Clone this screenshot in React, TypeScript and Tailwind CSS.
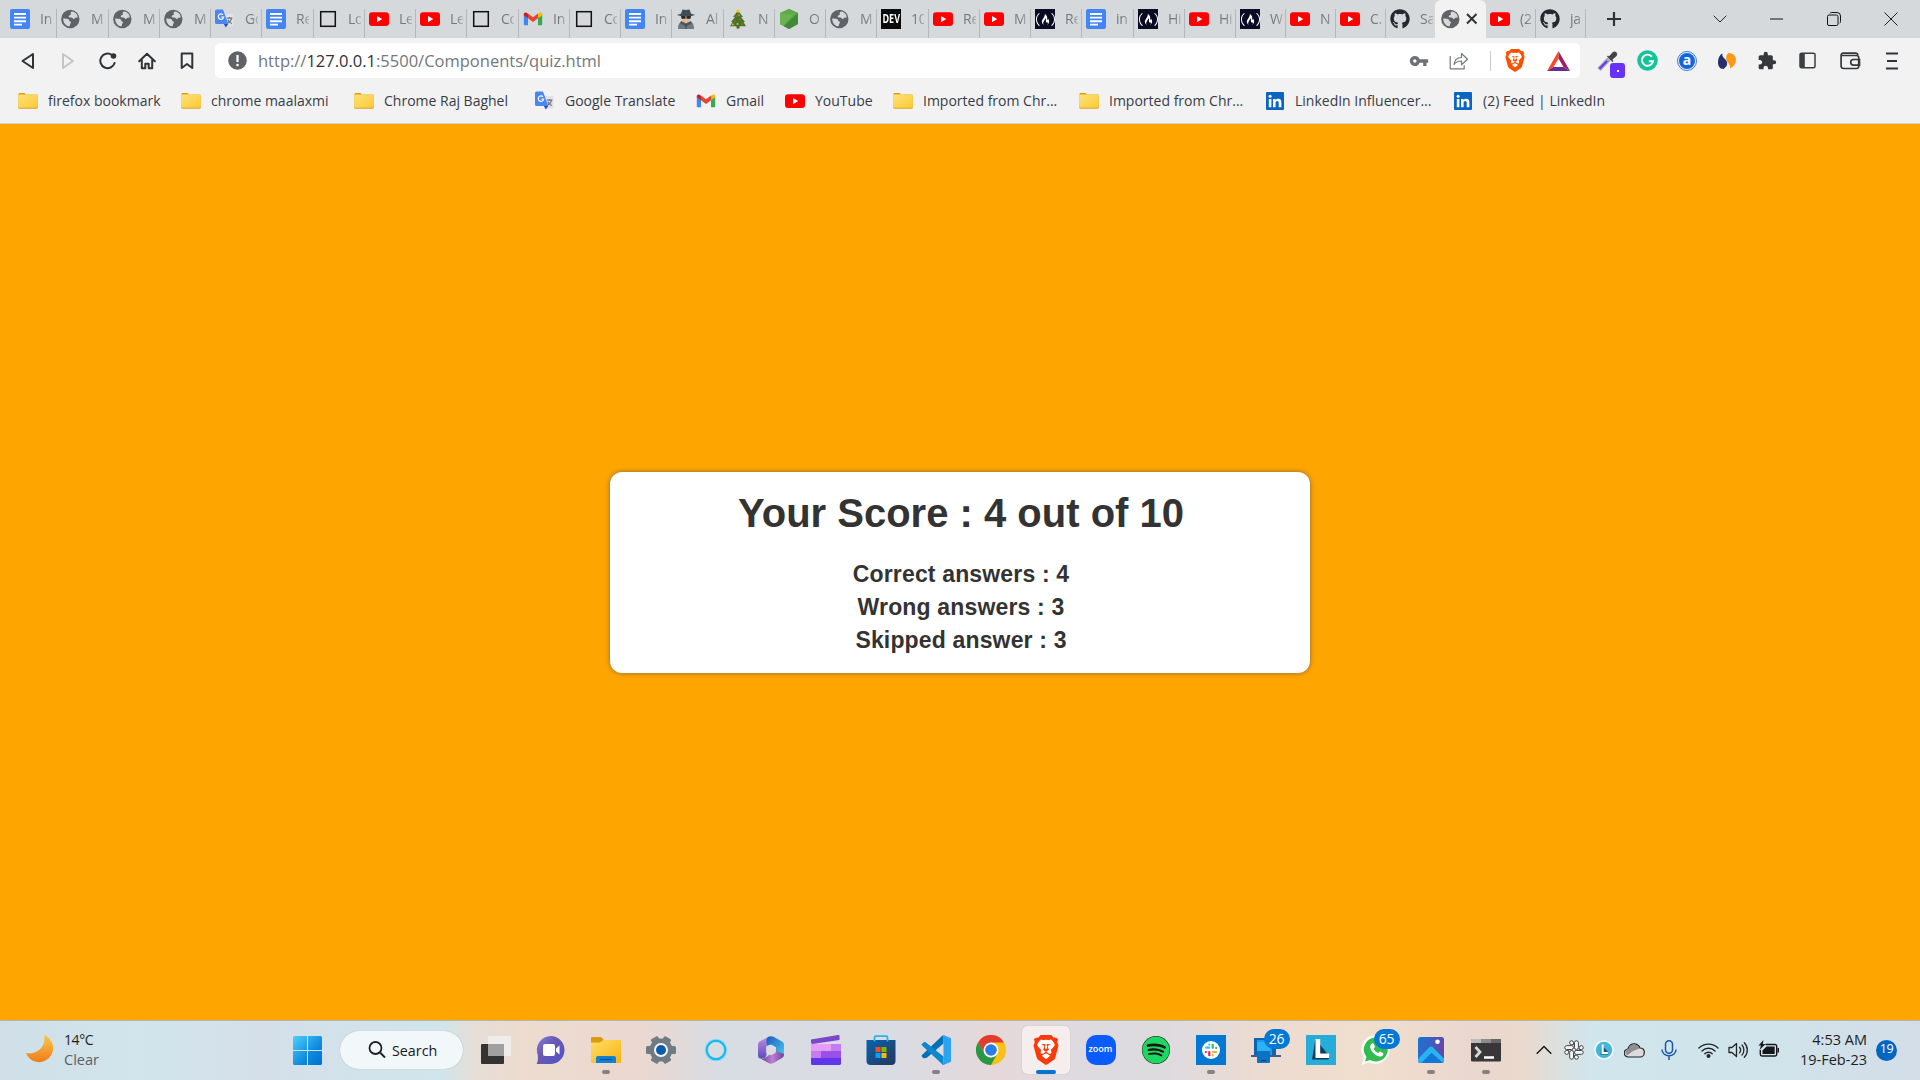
import React from "react";
import { SiSlack, SiFreecodecamp } from "react-icons/si";
import { FaGithub, FaSpotify } from "react-icons/fa";
import { MdExtension, MdVpnKey } from "react-icons/md";

/* ---------- favicons ---------- */
const Docs = () => (
  <svg width="20" height="20" viewBox="0 0 20 20">
    <rect width="20" height="20" rx="2" fill="#4285f4" />
    <path d="M4 5h12M4 8.600h12M4 12.200h12M4 15.600h8" stroke="#fff" strokeWidth="1.900" />
  </svg>
);
const Globe = () => (
  <svg width="20" height="20" viewBox="0 0 20 20">
    <circle cx="9.300" cy="10" r="9.200" fill="#5f6368" />
    <path d="M11 2.600c-1.800.6-1.600 2-.9 2.700-.6 1-2.400.9-2.400 2.300 0 1.100 1.200 1 2.500 1 1.500 0 1.600 1.400 2.600 1.400 1.100 0 1.100-1.500 2.200-1.500l1.600.3C17 5.500 14.600 3.300 11 2.600zM2.200 9.400c1.200.2 3.900.1 5 .7 1.400.8.5 1.900 1.900 2.300 1.300.3 1 1.200.3 2-.6.7-.2 1.600-.9 2.900C4.900 17 2.100 13.800 2.200 9.400z" fill="#d5d9dc" />
  </svg>
);
const Translate = () => (
  <svg width="20" height="20" viewBox="0 0 20 20">
    <path d="M8 5h10.500v12.500H12z" fill="#e0e2e4" />
    <path d="M11.800 9.200h5.600M14.500 8v1.200M16.500 9.500c-.5 2-2 3.800-4 4.800M12.800 10.800c.8 1.700 2.200 3 4 3.800" stroke="#71777d" strokeWidth="1.200" fill="none" />
    <path d="M0 2a1.500 1.500 0 0 1 1.500-1.500H8L13.300 15H1.500A1.500 1.500 0 0 1 0 13.500z" fill="#4a86f0" />
    <path d="M8.800 15h4.500l-2.500 3.500z" fill="#2450c4" />
    <path d="M8 5.800A2.700 2.700 0 1 0 8.700 8H6.200" stroke="#fff" strokeWidth="1.200" fill="none" />
  </svg>
);
const Square = () => (
  <svg width="20" height="20" viewBox="0 0 20 20">
    <rect x="2.700" y="2.700" width="14.600" height="14.600" fill="none" stroke="#111" strokeWidth="1.500" />
  </svg>
);
const YouTube = () => (
  <svg width="20" height="20" viewBox="0 0 20 20">
    <rect y="3.200" width="20" height="13.800" rx="3" fill="#f00" />
    <path d="M8 7l5.200 3.100L8 13.200z" fill="#fff" />
  </svg>
);
const Gmail = () => (
  <svg width="20" height="20" viewBox="0 0 20 20">
    <path d="M.8 5.500v9.800c0 .6.500 1 1 1H5V8.500z" fill="#4285f4" />
    <path d="M15 8.500v7.800h3.200c.6 0 1-.5 1-1V5.500z" fill="#34a853" />
    <path d="M15 4.700v4.600l4.200-3V5.200c0-1.700-1.500-2-2.700-1.400z" fill="#fbbc04" />
    <path d="M.8 6.200L5 9.300V4.700L3.500 3.800C2 3 .8 3.800.8 5.200z" fill="#c5221f" />
    <path d="M5 4.600l5 3.700 5-3.700v4.700L10 13 5 9.300z" fill="#ea4335" />
  </svg>
);
const Spy = () => (
  <svg width="20" height="20" viewBox="0 0 20 20">
    <path d="M2 20c0-4 1-6.500 4-7.200h8c3 .7 4 3.200 4 7.200z" fill="#6c7982" />
    <path d="M6 7h8v5l-4 3-4-3z" fill="#e8bb94" />
    <path d="M5 12l5 2.500 5-2.500 1 2.500-6 3-6-3z" fill="#4d5a63" />
    <path d="M5 7h4.500v2.700H5.500zM10.500 7H15l-.5 2.700h-4z" fill="#20262a" />
    <path d="M1 5.800c2-.5 3.300-.8 4-1.400L6.500.5c2 .6 5 .6 7 0L15 4.400c.7.6 2 .9 4 1.400-3 2-15 2-18 0z" fill="#414c54" />
    <path d="M10 15v5" stroke="#3e4950" />
  </svg>
);
const Tree = () => (
  <svg width="20" height="20" viewBox="0 0 20 20">
    <rect x="8.500" y="16" width="3" height="3.500" fill="#7a4b2a" />
    <path d="M10 1.500L15 8h-2l4 5h-1.500l2.500 4.300H2L4.500 13H3l4-5H5z" fill="#3c7a2a" />
    <circle cx="10" cy="2" r="1.700" fill="#f7c325" />
    <g fill="#e2452e"><circle cx="8.500" cy="7" r="1" /><circle cx="12" cy="10.500" r="1.100" /><circle cx="7" cy="12" r="1.100" /><circle cx="14" cy="15" r="1.100" /></g>
    <g fill="#f4b02c"><circle cx="11" cy="6" r=".8" /><circle cx="9.500" cy="15" r="1" /><circle cx="4.800" cy="15.500" r="1" /></g>
  </svg>
);
const Node = () => (
  <svg width="20" height="20" viewBox="0 0 20 20">
    <path d="M10 0l9 4v11l-9 5-9-5V4z" fill="#5aa648" />
    <path d="M1 4v11l3.500 2L17 3z" fill="#6ab352" />
    <path d="M19 4v11l-9 5-5.500-3z" fill="#43893a" />
    <path d="M10 0l9 4-2 2-16-2z" fill="#5fa94a" />
  </svg>
);
const Dev = () => (
  <span className="flex h-5 w-5 items-center justify-center overflow-hidden bg-[#0a0a0a]">
    <span className="scale-x-[0.78] scale-y-110 text-[11.5px] leading-5 font-bold text-white">DEV</span>
  </span>
);
const Fcc = () => (
  <span className="flex h-5 w-5 items-center justify-center bg-[#0a0a23]">
    <SiFreecodecamp size={19} color="#fff" />
  </span>
);
const GitHub = () => <FaGithub size={20} color="#24292f" />;
const Folder = () => (
  <svg width="20" height="20" viewBox="0 0 20 20">
    <defs>
      <linearGradient id="fold" x1="0" y1="0" x2="1" y2="1">
        <stop offset="0" stopColor="#ffe27a" />
        <stop offset="1" stopColor="#fcc934" />
      </linearGradient>
    </defs>
    <path d="M.5 4V3.300c0-.7.500-1.300 1.200-1.300h5l1.500 2z" fill="#dc9b10" />
    <rect x=".2" y="3.500" width="19.600" height="14.300" rx="1.300" fill="#d9a520" />
    <rect x=".2" y="3.500" width="19.600" height="13.300" rx="1.300" fill="url(#fold)" />
  </svg>
);
const LinkedIn = () => (
  <svg width="20" height="20" viewBox="0 0 20 20">
    <rect x="1" y="1" width="18" height="18" rx="1" fill="#0a66c2" />
    <path d="M3.800 8h2.600v8.300H3.800zM8 8h2.500v1.200c.5-.8 1.400-1.400 2.700-1.400 2.500 0 3.200 1.600 3.200 4v4.500h-2.700v-4c0-1.200-.2-2.200-1.500-2.200s-1.600 1-1.600 2.200v4H8z" fill="#fff" />
    <circle cx="5.100" cy="5.200" r="1.500" fill="#fff" />
  </svg>
);
const Lion = ({ w, h, color }: { w: number; h: number; color: string }) => (
  <svg width={w} height={h} viewBox="0 0 24 28">
    <path d="M7 0h10l2.300 2.500c1.500-.4 2.800.3 3.900 1.700L22.500 6.500l1.200 3.200-3 11.300c-.3 1-.8 1.700-1.700 2.300L13 27.500c-.7.500-1.300.5-2 0l-6-4.200c-.9-.6-1.400-1.300-1.700-2.300L.3 9.700l1.200-3.200L.8 4.200C1.900 2.800 3.200 2.100 4.700 2.500z" fill={color} />
    <path d="M7.500 4.200L10 4.800c1.300-.5 2.700-.5 4 0l2.500-.6c1 0 3.700 4.200 3.700 5.100 0 .8-2.400 3.200-3.400 4.300-.5.500-.3 1 .1 1.700.4.800 0 1.900-.8 2.200-.9.3-1.700-.4-2.500-1l-1-.7c-.3-.2-.3-.4 0-.6l1.600-1c.5-.3.400-.8.200-1.300l-.7-1.700c-.3-.8-.1-1.100.5-1.400l2.600-1-3.200-.3c-1 0-1.100.300-1 1l.5 2.700c0 .6-.8.8-1.100.8s-1.100-.2-1.100-.8l.5-2.700c.1-.7 0-1-1-1l-3.200.3 2.600 1c.6.300.8.6.5 1.400l-.7 1.700c-.2.5-.3 1 .2 1.300l1.600 1c.3.2.3.4 0 .6l-1 .7c-.8.600-1.600 1.300-2.500 1-.8-.3-1.200-1.400-.8-2.200.4-.7.600-1.200.1-1.700-1-1.100-3.400-3.500-3.400-4.300 0-.9 2.700-5.100 3.700-5.100z" fill="#fff" />
    <path d="M12 17.300c.5 0 3.300 1.500 3.500 1.800.3.300 0 .6-.2.800l-3 2.400c-.2.200-.4.200-.6 0l-3-2.400c-.2-.2-.5-.5-.2-.8.2-.3 3-1.800 3.500-1.800z" fill="#fff" />
  </svg>
);

/* ---------- tab strip ---------- */
type Tab = { w: string; t: string; I: () => React.ReactElement };
const W57 = "w-[57px] pl-[10px]", W52 = "w-[52px] pl-1", W51 = "w-[51px] pl-1", W50 = "w-[50px] pl-1", W49 = "w-[49px] pl-1";
const before: Tab[] = [
  { w: W57, t: "In", I: Docs },
  { w: W52, t: "M", I: Globe },
  { w: W51, t: "M", I: Globe },
  { w: W51, t: "M", I: Globe },
  { w: W51, t: "Go", I: Translate },
  { w: W52, t: "Re", I: Docs },
  { w: W51, t: "Lo", I: Square },
  { w: W51, t: "Le", I: YouTube },
  { w: W51, t: "Le", I: YouTube },
  { w: W52, t: "Co", I: Square },
  { w: W51, t: "In", I: Gmail },
  { w: W51, t: "Co", I: Square },
  { w: W51, t: "In", I: Docs },
  { w: W52, t: "Al", I: Spy },
  { w: W51, t: "N", I: Tree },
  { w: W51, t: "O", I: Node },
  { w: W51, t: "M", I: Globe },
  { w: W52, t: "10", I: Dev },
  { w: W51, t: "Re", I: YouTube },
  { w: W51, t: "M", I: YouTube },
  { w: W51, t: "Re", I: Fcc },
  { w: W52, t: "in", I: Docs },
  { w: W51, t: "Hi", I: Fcc },
  { w: W51, t: "Hi", I: YouTube },
  { w: W50, t: "W", I: Fcc },
  { w: W50, t: "N", I: YouTube },
  { w: W50, t: "C.", I: YouTube },
];
const after: Tab[] = [
  { w: W50, t: "(2", I: YouTube },
  { w: W50, t: "ja", I: GitHub },
];
const TabItem = ({ tab, line = true }: { tab: Tab; line?: boolean }) => (
  <div className={`${tab.w} mt-[9px] flex h-[29px] shrink-0 ${line ? "border-r border-[#b4b8bb]" : ""}`}>
    <span className="h-5 w-5 shrink-0"><tab.I /></span>
    <span className="ml-[10px] w-[13px] overflow-hidden text-[14px] leading-[19px] tracking-[-0.2px] whitespace-nowrap text-[#75797e] [mask-image:linear-gradient(90deg,#000_50%,rgba(0,0,0,0.35))]">{tab.t}</span>
  </div>
);

const TabStrip = () => (
  <div className="flex h-[38px] bg-[#d5d9dc]">
    {before.map((t, i) => <TabItem key={i} tab={t} />)}
    <TabItem tab={{ w: W49, t: "Sa", I: GitHub }} line={false} />
    <div className="flex w-[51px] shrink-0 gap-[5px] rounded-t-[6px] bg-[#f2f2f2] pt-[9px] pl-[6px]">
      <Globe />
      <svg width="12" height="20" viewBox="0 0 12 20"><path d="M1 5l9.500 9.500M10.500 5L1 14.500" stroke="#303236" strokeWidth="2" /></svg>
    </div>
    {after.map((t, i) => <TabItem key={i} tab={t} />)}
    <div className="flex flex-1 items-center pb-px">
      <svg className="ml-5" width="16" height="16" viewBox="0 0 16 16"><path d="M8 1v14M1 8h14" stroke="#303236" strokeWidth="2.200" /></svg>
      <svg className="ml-[91px]" width="14" height="8" viewBox="0 0 14 8"><path d="M.7.7L7 7 13.300.7" fill="none" stroke="#222" /></svg>
      <svg className="ml-[43px]" width="13" height="2" viewBox="0 0 13 2"><path d="M0 1h13" stroke="#111" /></svg>
      <svg className="ml-[44px]" width="14" height="14" viewBox="0 0 14 14">
        <rect x=".5" y="3" width="10.500" height="10.500" rx="1.500" fill="none" stroke="#111" />
        <path d="M2.800 1.200C3.300.7 4 .5 4.500.5h5.500A3.500 3.500 0 0 1 13.500 4v5.500c0 .8-.3 1.300-.8 1.700" fill="none" stroke="#111" />
      </svg>
      <svg className="ml-[43px]" width="14" height="14" viewBox="0 0 14 14"><path d="M.5.5l13 13M13.500.5l-13 13" stroke="#222" /></svg>
    </div>
  </div>
);

/* ---------- toolbar ---------- */
const ink = "#303438";
const Toolbar = () => (
  <div className="flex h-[45px] items-center pl-5">
    <svg width="15" height="18" viewBox="0 0 15 18"><path d="M13 2v14L2.500 9z" fill="none" stroke={ink} strokeWidth="2" strokeLinejoin="round" /></svg>
    <svg className="ml-[26px]" width="15" height="18" viewBox="0 0 15 18"><path d="M2 2v14l10-7z" fill="none" stroke="#c3c5c7" strokeWidth="2" strokeLinejoin="round" /></svg>
    <svg className="ml-[23px]" width="18" height="18" viewBox="0 0 18 18">
      <path d="M13 3A7.300 7.300 0 1 0 15.600 11" fill="none" stroke={ink} strokeWidth="2" strokeLinecap="round" />
      <circle cx="14.500" cy="4" r="2.800" fill={ink} />
    </svg>
    <svg className="ml-[21px]" width="18" height="18" viewBox="0 0 18 18">
      <path d="M1.200 9.200L9 1.800l7.800 7.400M3.800 8v8.200h3.500v-4.500h3.400v4.500h3.500V8" fill="none" stroke={ink} strokeWidth="2" strokeLinejoin="round" strokeLinecap="round" />
    </svg>
    <svg className="ml-6" width="14" height="18" viewBox="0 0 14 18"><path d="M1.700 1.500h10.600v14.500L7 12l-5.300 4z" fill="none" stroke={ink} strokeWidth="2" strokeLinejoin="round" /></svg>

    <div className="ml-[21px] flex h-[35px] w-[1365px] items-center rounded-[5px] bg-white pl-[13px]">
      <svg width="19" height="19" viewBox="0 0 19 19"><circle cx="9.500" cy="9.500" r="9.300" fill="#5f6368" /><path d="M9.500 4v7" stroke="#fff" strokeWidth="2.200" /><circle cx="9.500" cy="14" r="1.300" fill="#fff" /></svg>
      <span className="ml-[11px] w-[1151px] shrink-0 pt-px text-[16.5px] whitespace-nowrap text-[#74777b]">
        http://<span className="text-[#2f3236]">127.0.0.1</span>:5500/Components/quiz.html
      </span>
      <MdVpnKey size={20} color="#6d7074" />
      <svg className="ml-5" width="20" height="18" viewBox="0 0 20 18">
        <path d="M1.200 4v12.800h14v-3.500M5 12.500c.5-4.500 3-6.800 7.500-7V1.500l6 5.800-6 5.500V9c-3.500 0-5.700 1-7.500 3.500z" fill="none" stroke="#76797c" strokeWidth="1.200" strokeLinejoin="round" />
      </svg>
      <span className="ml-[21px] h-5 w-px bg-[#c9cbcd]" />
      <span className="ml-[14px]"><Lion w={20} h={23} color="#ff5000" /></span>
      <svg className="ml-[22px]" width="23" height="20" viewBox="0 0 23 20">
        <path d="M11.500 0L0 20l6.500-4 5-8.500z" fill="#ff4724" />
        <path d="M11.500 0L23 20l-6.500-4-5-8.500z" fill="#9e1f63" />
        <path d="M0 20h23l-6.500-4h-10z" fill="#662d91" />
      </svg>
    </div>

    <div className="relative ml-[17px] h-[28px] w-[28px]">
      <svg width="22" height="22" viewBox="0 0 22 22" className="absolute top-[3px] left-0">
        <path d="M2 19.500L12 9" stroke="#a9a6b4" strokeWidth="4.500" />
        <path d="M2.500 18.800L10 11" stroke="#6b3df0" strokeWidth="2.300" />
        <path d="M10.500 6l5.500 5.500M12.500 7l3.500-4c2-2 4.500.5 3 2.500L15 9z" fill="#444" stroke="#444" strokeWidth="1.500" />
      </svg>
      <span className="absolute top-[16px] left-[13px] flex h-[15px] w-[15px] items-center justify-center rounded-[3px] bg-[#6930fa] pt-[2px]"><span className="h-[2px] w-[2px] bg-white" /></span>
    </div>
    <svg className="ml-[12px]" width="21" height="21" viewBox="0 0 21 21">
      <circle cx="10.500" cy="10.500" r="10.300" fill="#15c39a" />
      <path d="M14.800 6.600A5.600 5.600 0 1 0 16 11.300h-4.200" fill="none" stroke="#fff" strokeWidth="1.900" />
    </svg>
    <span className="ml-[19px] flex h-5 w-5 items-center justify-center rounded-full border border-[#3f7fd0] p-[1px]">
      <span className="flex h-4 w-4 items-center justify-center rounded-full bg-[#1166dd] pb-[2px] text-[14px] leading-none font-bold text-white">a</span>
    </span>
    <svg className="ml-5" width="20" height="20" viewBox="0 0 20 20">
      <path d="M5.500 2.500c-.8 3 1.600 4.300 3 6 2.500 3 2.500 6.500-2 9.500C2.500 18 .8 14.500 1 10.500c.2-4 2-7 4.500-8z" fill="#263069" />
      <path d="M13 17.500c.5-3-.9-4.500-2.300-6.300C8.500 8.200 8.800 4.500 11.300 2c5-.5 7.700 3.500 7.700 7-.2 4-2.500 7-6 8.500z" fill="#ff9817" />
    </svg>
    <span className="ml-5"><MdExtension size={20} color="#34383c" /></span>
    <svg className="ml-[22px]" width="17" height="17" viewBox="0 0 17 17"><rect x="1" y="1.200" width="15" height="14.600" rx="1.500" fill="none" stroke="#3b3e42" strokeWidth="1.500" /><path d="M1 1.500h4.800v14H1z" fill="#3b3e42" /></svg>
    <svg className="ml-6" width="21" height="18" viewBox="0 0 21 18">
      <path d="M2 3.500h14.500a2.200 2.200 0 0 1 2.200 2v9a2.200 2.200 0 0 1-2.200 2H3.500a2.500 2.500 0 0 1-2.400-2V3A2 2 0 0 1 3 1.200h13c1 0 1.800.7 1.900 1.800M19.500 7.500h-6a2.800 2.800 0 0 0 0 5.600h6z" fill="none" stroke="#34383c" strokeWidth="1.700" />
    </svg>
    <svg className="ml-[25px]" width="12" height="18" viewBox="0 0 12 18"><path d="M0 1.500h12M1 9h10M0 16.500h12" stroke="#303438" strokeWidth="1.800" /></svg>
  </div>
);

/* ---------- bookmarks ---------- */
const bookmarks = [
  { w: "w-[163px]", t: "firefox bookmark", I: Folder },
  { w: "w-[173px]", t: "chrome maalaxmi", I: Folder },
  { w: "w-[181px]", t: "Chrome Raj Baghel", I: Folder },
  { w: "w-[161px]", t: "Google Translate", I: Translate },
  { w: "w-[89px]", t: "Gmail", I: Gmail },
  { w: "w-[108px]", t: "YouTube", I: YouTube },
  { w: "w-[186px]", t: "Imported from Chr...", I: Folder },
  { w: "w-[186px]", t: "Imported from Chr...", I: Folder },
  { w: "w-[188px]", t: "LinkedIn Influencer...", I: LinkedIn },
  { w: "w-[160px]", t: "(2) Feed | LinkedIn", I: LinkedIn },
];
const Bookmarks = () => (
  <div className="flex h-[41px] items-center border-b border-[#d0d4dc] pl-[18px] pb-1">
    {bookmarks.map((b, i) => (
      <div key={i} className={`${b.w} flex shrink-0 items-center gap-[10px] text-[14px] whitespace-nowrap text-[#383c48]`}>
        <b.I />
        <span className="pb-[2px]">{b.t}</span>
      </div>
    ))}
  </div>
);

/* ---------- taskbar icons ---------- */
const SlackColor = ({ size }: { size: number }) => (
  <svg width={size} height={size} viewBox="0 0 18 18">
    <circle cx="9" cy="9" r="9" fill="#fff" />
    <g strokeWidth="2.200" strokeLinecap="round">
      <path d="M7.300 6.600H4M7.300 3.500v.2" stroke="#36c5f0" />
      <path d="M10.700 3.800v3M14.200 6.800v.1" stroke="#2eb67d" />
      <path d="M10.800 11h3.300M10.700 14.300v-.1" stroke="#ecb22e" />
      <path d="M7.300 11v3.200M3.800 11h.1" stroke="#e01e5a" />
    </g>
  </svg>
);
const TaskView = () => (
  <svg width="30" height="30" viewBox="0 0 30 30">
    <rect x="0" y="9" width="23" height="20" rx="1" fill="#333" />
    <rect x="7" y="1" width="23" height="20" rx="1" fill="#eee" opacity=".9" />
    <path d="M7 9h16v12H7z" fill="#999" opacity=".9" />
  </svg>
);
const Chat = () => (
  <svg width="30" height="30" viewBox="0 0 30 30">
    <defs><linearGradient id="chat" x1="0" y1="0" x2="1" y2="1"><stop offset="0" stopColor="#7b83eb" /><stop offset=".4" stopColor="#6c58b0" /><stop offset="1" stopColor="#4f52cc" /></linearGradient></defs>
    <path d="M15 1a14 14 0 1 1-1 28H1.500c-.8 0-1-.5-.5-1.200C2 26 2 24 1.800 20A14 14 0 0 1 15 1z" fill="url(#chat)" />
    <rect x="7" y="9" width="12" height="12" rx="2" fill="#fff" /><path d="M20 13.500l3.500-3v9l-3.500-3z" fill="#fff" />
  </svg>
);
const Explorer = () => (
  <svg width="30" height="30" viewBox="0 0 30 30">
    <defs><linearGradient id="ex" x1="0" y1="0" x2="1" y2="1"><stop offset="0" stopColor="#ffdc66" /><stop offset="1" stopColor="#f7b512" /></linearGradient></defs>
    <path d="M0 9V3.500C0 2.500.8 2 1.500 2H10l3 3-3 4z" fill="#dd9a0b" />
    <path d="M0 7.500h9L12.500 5H29c.6 0 1 .5 1 1v21c0 .6-.4 1-1 1H1c-.6 0-1-.4-1-1z" fill="url(#ex)" />
    <path d="M5 28v-5a2 2 0 0 1 2-2h16a2 2 0 0 1 2 2v5z" fill="#1181d2" /><path d="M9 24.500h12" stroke="#0b4f8f" strokeWidth="1.200" />
  </svg>
);
const Gear = () => (
  <svg width="30" height="30" viewBox="0 0 30 30">
    <g fill="#707b84">
      <circle cx="15" cy="15" r="11.500" />
      <rect x="11" y="0.800" width="8" height="28.400" rx="1.500" transform="rotate(30 15 15)" />
      <rect x="11" y="0" width="8" height="30" rx="1.500" transform="rotate(90 15 15)" />
      <rect x="11" y="0.800" width="8" height="28.400" rx="1.500" transform="rotate(150 15 15)" />
    </g>
    <circle cx="15" cy="15" r="7" fill="#f5f7f8" /><circle cx="15" cy="15" r="5" fill="#0f5bab" />
  </svg>
);
const Cortana = () => (
  <svg width="30" height="30" viewBox="0 0 30 30"><circle cx="15" cy="15" r="9.500" fill="none" stroke="#8edcf6" strokeWidth="3.500" /><circle cx="15" cy="15" r="9.300" fill="none" stroke="#17b6ef" strokeWidth="2" /></svg>
);
const M365 = () => (
  <svg width="30" height="30" viewBox="0 0 30 30">
    <defs>
      <linearGradient id="m1" x1="0" y1="0" x2="0" y2="1"><stop offset="0" stopColor="#c58be0" /><stop offset="1" stopColor="#5b4dbd" /></linearGradient>
      <linearGradient id="m2" x1="0" y1="0" x2="1" y2="1"><stop offset="0" stopColor="#1a59b8" /><stop offset="1" stopColor="#45cdf8" /></linearGradient>
      <linearGradient id="m3" x1="0" y1="0" x2="1" y2="0"><stop offset="0" stopColor="#5d3a86" /><stop offset=".5" stopColor="#c07fd9" /><stop offset="1" stopColor="#6d4494" /></linearGradient>
    </defs>
    <path d="M13 1.500L3.500 6.500A4 4 0 0 0 2 9.500V20c0 2 .8 3.500 2.500 3.500H7c2-.5 3.500-2 3.500-4V10z" fill="url(#m1)" />
    <path d="M12.500 1.800c1.500-.9 3.500-.9 5 0L26 6.500A3.500 3.500 0 0 1 28 9.500V20c-1 1.500-4 1-8-1.500v-6l-5-3-4.500 1.500V6c0-2 .5-3.500 2-4.200z" fill="url(#m2)" />
    <path d="M28 19c0 2-.5 3.200-2 4l-8.500 5a5 5 0 0 1-5 0l-8-4.500c3 .5 5-.5 6.500-2l4-3 5-2.500 8 3z" fill="url(#m3)" />
    <path d="M15 9.800l4.700 2.500v5.400L15 20.300l-4.700-2.600v-5.400z" fill="#dcdce0" />
  </svg>
);
const Clipchamp = () => (
  <svg width="30" height="30" viewBox="0 0 30 30">
    <path d="M0 4.500L27 0c1-.2 1.500.3 1.500 1v4L1.500 9C.6 9 0 8 0 7z" fill="#7d45c9" />
    <path d="M0 9h30v7H0z" fill="#c47af0" /><path d="M0 9h20v7H0z" fill="#e49cf6" />
    <path d="M0 16h30v7H0z" fill="#9a4eea" /><path d="M0 16h10v7H0z" fill="#c77bef" />
    <path d="M0 23h30v5.500c0 .8-.6 1.500-1.500 1.500h-27C.6 30 0 29.300 0 28.500z" fill="#6036ea" />
  </svg>
);
const Store = () => (
  <svg width="30" height="30" viewBox="0 0 30 30">
    <defs><linearGradient id="st" x1="0" y1="0" x2="1" y2="1"><stop offset="0" stopColor="#0a63ae" /><stop offset="1" stopColor="#25365c" /></linearGradient></defs>
    <path d="M.5 5h29v21c0 2.500-1.500 4-4 4h-21c-2.500 0-4-1.500-4-4z" fill="url(#st)" />
    <path d="M8.500 6.500V2.500c0-.8.500-1.300 1.300-1.300h10.400c.8 0 1.300.5 1.300 1.300v4" fill="none" stroke="#26b5ee" strokeWidth="1.800" />
    <path d="M9.500 12h5v5h-5z" fill="#f25022" /><path d="M15.500 12h5v5h-5z" fill="#7fba00" /><path d="M9.500 18h5v5h-5z" fill="#00a4ef" /><path d="M15.500 18h5v5h-5z" fill="#ffb900" />
  </svg>
);
const VsCode = () => (
  <svg width="30" height="30" viewBox="0 0 30 30">
    <path d="M22.500 0v8.500L5.500 23l-3 .2L1 21.800c-.6-.5-.6-1.200 0-1.700L21 1z" fill="#0071b6" />
    <path d="M22.500 30v-8.500L5 7.500c-.8-.6-1.700-.6-2.500 0L1 8.700c-.6.5-.6 1.200 0 1.700L21 29z" fill="#0d87cd" />
    <path d="M22.500 0L30 3.300v23.400L22.500 30c-1 0-1.500-.5-1.500-1l1.500-.5z" fill="#2aa4ee" />
  </svg>
);
const Chrome = () => (
  <svg width="30" height="30" viewBox="0 0 30 30">
    <circle cx="15" cy="15" r="15" fill="#fbc116" />
    <path d="M2 7.500A15 15 0 0 1 28 7.500H15L8.500 18.700z" fill="#e33b2e" />
    <path d="M2 7.500l6.500 11.200A7.500 7.500 0 0 0 15 22.500l6-3.200L15 30A15 15 0 0 1 2 7.500z" fill="#279847" />
    <circle cx="15" cy="15" r="7.500" fill="#fff" /><circle cx="15" cy="15" r="5.800" fill="#2b7be8" />
  </svg>
);
const Brave = () => <Lion w={26} h={30} color="#fb3a0c" />;
const Zoom = () => (
  <span className="flex h-[30px] w-[30px] items-center justify-center rounded-[10px] bg-[#0b5cff] pb-[3px] text-[9px] leading-none font-semibold text-white">zoom</span>
);
const Spotify = () => (
  <span className="rounded-full bg-[#191414] bg-clip-content p-[2px]"><FaSpotify size={28} color="#1ed760" /></span>
);
const SlackTile = () => (
  <span className="flex h-[30px] w-[30px] items-center justify-center bg-[#0078d4]"><SlackColor size={18} /></span>
);
const Phone = () => (
  <svg width="30" height="30" viewBox="0 0 30 30">
    <path d="M3 3h22v17H3z" fill="#0f62ad" /><path d="M0 20h30v2H0z" fill="#3c5f93" />
    <path d="M6 5h15v15H6z" fill="#1e9be8" /><rect x="6" y="14" width="13" height="14" rx="1" fill="#0e72c4" /><path d="M6 7h13v9H6z" fill="#2cb1f2" /><path d="M10 25.500h5" stroke="#0a3f78" />
  </svg>
);
const LTile = () => (
  <svg width="30" height="30" viewBox="0 0 30 30"><path d="M0 0h30v30H0z" fill="#25acd8" /><path d="M9.500 4L6 24.500h16.500l1-3z" fill="#123c5e" /><path d="M9.500 4h4.700v14.500h9V23H9.500z" fill="#fff" /></svg>
);
const WhatsApp = () => (
  <svg width="30" height="30" viewBox="0 0 30 30">
    <path d="M15.500 0A14.500 14.500 0 1 1 8 27.500L.5 30l2.300-7.500A14.500 14.500 0 0 1 15.500 0z" fill="#f8faf8" />
    <path d="M15.500 2.500A12 12 0 1 1 9 25l-5 1.500L5.500 22a12 12 0 0 1 10-19.500z" fill="#34bb4f" />
    <path d="M11 8.500c-3 2-2 6 1.500 9.500s7.500 5 9.500 2c.8-1.200.3-1.800-.5-2.300l-2.300-1.200c-1-.4-1.200 1.700-2.200 1.400-1.800-.6-3.800-2.500-4.300-4.200-.2-.8 1.500-1.200 1.200-2.200l-1-2.400c-.4-.8-1.100-1.100-1.900-.6z" fill="#fff" />
  </svg>
);
const Photos = () => (
  <svg width="26" height="26" viewBox="0 0 26 26">
    <defs><linearGradient id="ph" x1="0" y1="0" x2="1" y2=".3"><stop offset="0" stopColor="#1378d6" /><stop offset="1" stopColor="#6546aa" /></linearGradient></defs>
    <rect width="26" height="26" rx="2.500" fill="url(#ph)" />
    <path d="M0 22l11-11.500c1.300-1.400 2.700-1.400 4 0L26 21.500v2.500l-1.500 1.700L13.500 16 3.500 26H2l-2-2z" fill="#27b4f2" />
    <path d="M3.500 26l10-10 11 9.700-.5.300z" fill="#1377d8" />
    <circle cx="19.500" cy="4.800" r="2.300" fill="#fff" />
  </svg>
);
const Terminal = () => (
  <svg width="30" height="24" viewBox="0 0 30 24">
    <rect y="1" width="30" height="22.500" rx="1.200" fill="#373737" /><path d="M0 2c0-.6.4-1 1-1h9v4H0z" fill="#bdbdbd" /><path d="M10 1h10v4H10z" fill="#8c8c8c" /><path d="M20 1h9c.6 0 1 .4 1 1v3H20z" fill="#666" />
    <path d="M4.500 9l4.500 5-4.500 5" fill="none" stroke="#d6d6d6" strokeWidth="2.800" /><path d="M13 19.500h10" stroke="#fff" strokeWidth="2.500" />
  </svg>
);

type AppEntry = { I: () => React.ReactElement; dot?: boolean; active?: boolean; badge?: string };
const apps: AppEntry[] = [
  { I: TaskView }, { I: Chat }, { I: Explorer, dot: true }, { I: Gear }, { I: Cortana }, { I: M365 }, { I: Clipchamp }, { I: Store },
  { I: VsCode, dot: true }, { I: Chrome }, { I: Brave, active: true }, { I: Zoom }, { I: Spotify }, { I: SlackTile, dot: true },
  { I: Phone, badge: "26" }, { I: LTile }, { I: WhatsApp, badge: "65" }, { I: Photos, dot: true }, { I: Terminal, dot: true },
];

const Taskbar = () => (
  <div className="flex h-[60px] items-center border-t border-[#b3b6ae] bg-[linear-gradient(90deg,#d0dfe7_0px,#d1e5ec_140px,#d4dfe9_260px,#d0e5ec_440px,#e6ded7_475px,#eddccf_520px,#ead8d1_645px,#d8dde3_720px,#d9dce2_900px,#e6d8da_1000px,#dedbe0_1080px,#dedbdf_1170px,#ecdbd0_1260px,#f0decd_1370px,#ead7cf_1470px,#ead9cd_1520px,#d0e5ec_1590px,#d0e4eb_1750px,#d3dde8_1920px)] pb-px">
    <div className="flex w-[293px] items-center pl-[26px]">
      <svg className="mb-[2px]" width="28" height="28" viewBox="0 0 28 28">
        <defs><linearGradient id="moon" x1="0" y1="0" x2="0" y2="1"><stop offset="0" stopColor="#f8c94a" /><stop offset="1" stopColor="#ee7d1c" /></linearGradient></defs>
        <path d="M18 0A14 14 0 1 1 0 18C9 20 21 13 18 0z" fill="url(#moon)" />
      </svg>
      <div className="ml-[10px] text-[14px] leading-5 text-[#1c1f22]">
        <div className="tracking-[-0.4px]">14°C</div>
        <div className="text-[14.5px] text-[#596066]">Clear</div>
      </div>
    </div>
    <svg width="29" height="29" viewBox="0 0 29 29">
      <defs><linearGradient id="win" x1="0" y1="0" x2="1" y2="1"><stop offset="0" stopColor="#4fd0fb" /><stop offset=".6" stopColor="#0f8ade" /><stop offset="1" stopColor="#0071cf" /></linearGradient></defs>
      <path d="M1 0h13v14H0V1zM15 0h13l1 1v13H15zM0 15h14v14H1l-1-1zM15 15h14v13l-1 1H15z" fill="url(#win)" />
    </svg>
    <div className="ml-[18px] flex h-[38px] w-[123px] items-center rounded-full bg-[#f2f7fa] pl-[28px] shadow-[0_0_1px_rgba(0,0,0,0.3)]">
      <svg width="18" height="18" viewBox="0 0 18 18"><circle cx="7.500" cy="7" r="6" fill="none" stroke="#202427" strokeWidth="1.800" /><path d="M12 11.500l5 5" stroke="#202427" strokeWidth="2" /></svg>
      <span className="ml-[6px] pt-px text-[14.3px] text-[#17191b]">Search</span>
    </div>
    <div className="ml-[5px] flex">
      {apps.map((a, i) => (
        <div key={i} className="flex w-[55px] justify-center">
          <div className={`relative flex h-12 w-12 items-center justify-center rounded-[5px] ${a.active ? "bg-[#f5eeed] shadow-[0_0_1px_rgba(0,0,0,0.3)]" : ""}`}>
            <a.I />
            {a.dot && <span className="absolute bottom-0 left-5 h-1 w-2 rounded-full bg-[#858180]" />}
            {a.active && <span className="absolute bottom-0 left-[14px] h-1 w-5 rounded-full bg-[#0874d1]" />}
            {a.badge && <span className="absolute top-[3px] left-[22px] flex h-5 w-[26px] items-center justify-center rounded-full bg-[#0078d4] text-[14px] leading-none tracking-[-0.3px] text-white">{a.badge}</span>}
          </div>
        </div>
      ))}
    </div>
    <div className="ml-[23px] flex items-center">
      <svg width="16" height="10" viewBox="0 0 16 10"><path d="M.7 8.800L8 1.500l7.300 7.300" fill="none" stroke="#15181a" strokeWidth="1.400" /></svg>
      <svg className="ml-[12px]" width="20" height="20" viewBox="-1 -1 26 26"><SiSlack size={24} color="#f4f8fa" stroke="#444" strokeWidth="1.300" overflow="visible" /></svg>
      <svg className="ml-[10px]" width="20" height="20" viewBox="0 0 20 20"><circle cx="10" cy="10" r="9" fill="#45b7d6" stroke="#f3fafc" strokeWidth="1.500" /><path d="M7.500 4.500l-1 10H14l.5-2z" fill="#1a5674" /><path d="M7.500 4.500h2.200V12h4.500v2H7.500z" fill="#fff" /></svg>
      <svg className="ml-[10px]" width="21" height="15" viewBox="0 0 21 15">
        <path d="M4.500 14a4 4 0 0 1-.5-8C5 2 7.500.8 10.200.8S15 2.500 16 5c3 0 4.300 2 4.300 4.500s-1.800 4.500-4 4.500z" fill="#dcdcdc" stroke="#222" strokeWidth="1.200" />
        <path d="M1.500 10C1.500 7.500 3 6.500 4.500 6.200 5.500 2 8 1.300 10.200 1.300S14.500 3 15.500 5.500L9 8 3 12.500z" fill="#8d8f91" />
      </svg>
      <svg className="ml-[16px]" width="16" height="20" viewBox="0 0 16 20"><rect x="4.500" y=".8" width="7" height="12.500" rx="3.500" fill="none" stroke="#1b57a8" strokeWidth="1.500" /><path d="M1 9.500a7 6.300 0 0 0 14 0M8 15.800V20" fill="none" stroke="#1b57a8" strokeWidth="1.500" /></svg>
      <svg className="ml-[21px]" width="21" height="16" viewBox="0 0 21 16">
        <g fill="none" stroke="#222629" strokeWidth="1.400" strokeLinecap="round"><path d="M1 6a13.500 13.500 0 0 1 19 0" /><path d="M4 9a9.200 9.200 0 0 1 13 0" /><path d="M6.800 11.800a5.200 5.200 0 0 1 7.400 0" /></g><circle cx="10.500" cy="14" r="2" fill="#222629" />
      </svg>
      <svg className="ml-[9px]" width="20" height="18" viewBox="0 0 20 18">
        <path d="M1 6.500v5h3l4.500 4V2.500L4 6.500z" fill="none" stroke="#222629" strokeWidth="1.300" strokeLinejoin="round" />
        <path d="M11.500 6.200c1.300 1.500 1.300 4 0 5.600M14 4c2.500 2.500 2.500 7.500 0 10M16.300 1.800c4 4 4 10.500 0 14.400" fill="none" stroke="#222629" strokeWidth="1.300" strokeLinecap="round" />
      </svg>
      <svg className="ml-[10px] mb-[2px]" width="22" height="18" viewBox="0 0 22 18">
        <path d="M7.500 4.500H17a1.700 1.700 0 0 1 1.700 1.700v8.100A1.700 1.700 0 0 1 17 16H4a1.700 1.700 0 0 1-1.700-1.700V10" fill="none" stroke="#15181a" strokeWidth="1.400" />
        <path d="M4.500 10.500l4-4h8.200v7.500H4.500z" fill="#15181a" /><path d="M19.500 8H21v4.500h-1.500z" fill="#15181a" />
        <path d="M5.500 0L.5 5.500H3L1.500 10l6-6H4.800z" fill="#15181a" />
      </svg>
    </div>
    <div className="flex-1 text-right text-[14.5px] leading-5 whitespace-nowrap text-[#1c1f22]">
      <div>4:53 AM</div>
      <div>19-Feb-23</div>
    </div>
    <span className="mr-[23px] ml-[9px] flex h-[21px] w-[21px] items-center justify-center rounded-full bg-[#0067c0] pb-px text-[12.5px] leading-none tracking-[-0.3px] text-white">19</span>
  </div>
);

export default function App() {
  return (
    <div className="flex h-[1080px] w-[1920px] flex-col overflow-hidden bg-[#ffa500] font-['Open_Sans',sans-serif]">
      <header className="bg-[#f2f2f2]">
        <TabStrip />
        <Toolbar />
        <Bookmarks />
      </header>
      <main className="flex flex-1 items-center justify-center font-['Liberation_Sans',sans-serif] font-bold text-[#333]">
        <section className="h-[201px] w-[700px] rounded-[12px] bg-white pt-[14px] pl-[2px] text-center shadow-[0_0_5px_rgba(80,80,80,0.7)]">
          <h1 className="text-[40px] leading-[54px]">Your Score : 4 out of 10</h1>
          <div className="mt-[18px] text-[23px] leading-[33px] tracking-[0.16px]">
            <p>Correct answers : 4</p>
            <p>Wrong answers : 3</p>
            <p>Skipped answer : 3</p>
          </div>
        </section>
      </main>
      <Taskbar />
    </div>
  );
}
